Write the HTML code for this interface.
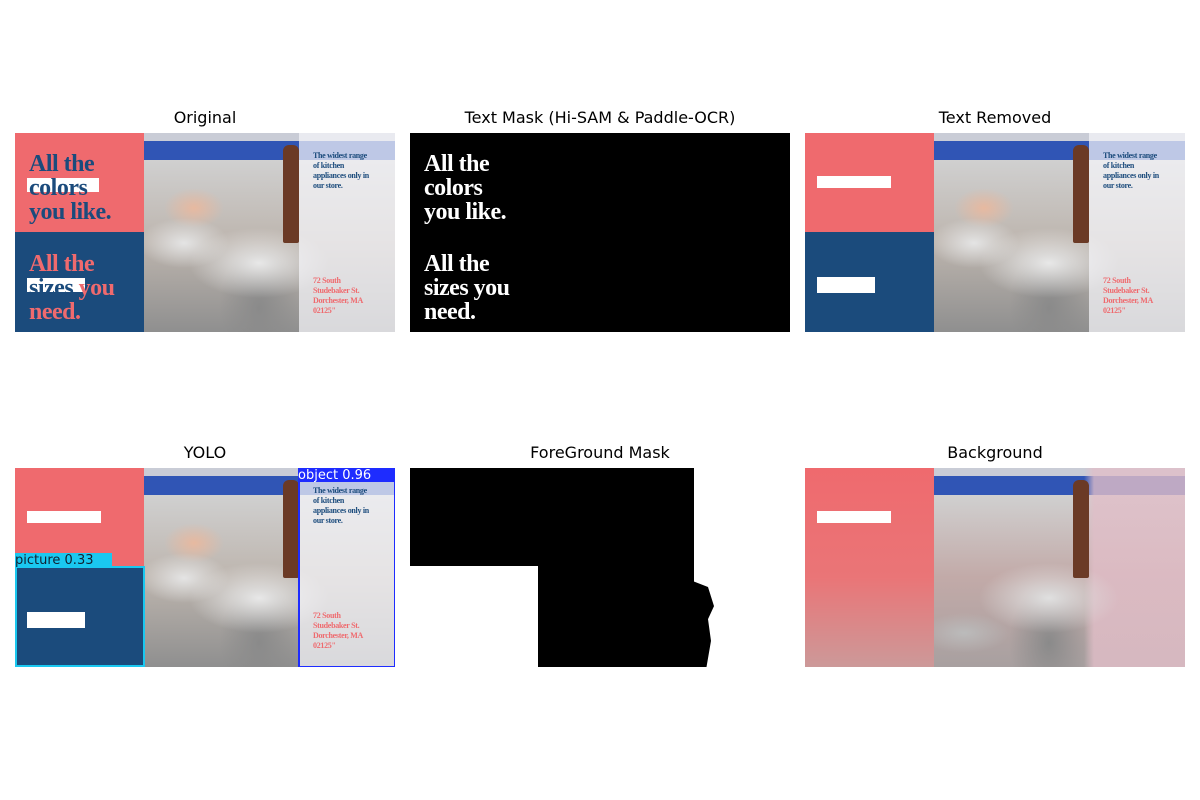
<!DOCTYPE html>
<html><head><meta charset="utf-8"><style>
body{margin:0;width:1200px;height:800px;background:#fff;font-family:"DejaVu Sans","Liberation Sans",sans-serif;position:relative;overflow:hidden}
.t{position:absolute;font-size:16px;color:#000;text-align:center;width:380px}
.p{position:absolute;width:380px;height:199px;overflow:hidden}
.pink{position:absolute;left:0;top:0;width:129px;height:99px;background:#ef6a6e}
.navy{position:absolute;left:0;top:99px;width:129px;height:100px;background:#1b4b7c}
.photo{position:absolute;left:129px;top:0;width:251px;height:199px;
background:
radial-gradient(ellipse 45px 25px at 40px 110px,#e4e4e4,transparent),
radial-gradient(ellipse 70px 35px at 115px 130px,#e8e8e8,transparent),
radial-gradient(ellipse 40px 60px at 115px 175px,#8a8a8a,transparent),
radial-gradient(ellipse 30px 20px at 50px 75px,#e7b9a0,transparent),
linear-gradient(#c9ccd6 0,#c9ccd6 8px,#3055b5 8px,#3055b5 27px,#d0d0d0 27px,#bdb5ae 55%,#8f8f8f 100%)}
.fade{position:absolute;left:155px;top:0;width:96px;height:199px;background:rgba(245,245,250,.72)}
.pepper{position:absolute;left:139px;top:12px;width:16px;height:98px;background:#6b3a26;border-radius:6px 6px 2px 2px}
.big{position:absolute;left:14px;font:bold 24px/24px "Liberation Serif",serif;letter-spacing:-0.5px}
.sm{position:absolute;left:298px;font:bold 8px/10px "Liberation Serif",serif;letter-spacing:-0.3px}
.bar{position:absolute;left:12px;width:72px;height:14px;background:#fff}
</style></head><body>
<div class="t" style="left:15px;top:108px">Original</div>
<div class="t" style="left:410px;top:108px">Text Mask (Hi-SAM &amp; Paddle-OCR)</div>
<div class="t" style="left:805px;top:108px">Text Removed</div>
<div class="t" style="left:15px;top:443px">YOLO</div>
<div class="t" style="left:410px;top:443px">ForeGround Mask</div>
<div class="t" style="left:805px;top:443px">Background</div>

<div class="p" style="left:15px;top:133px">
<div class="pink"></div><div class="navy"></div><div class="photo"><div class="pepper"></div><div class="fade"></div></div>
<div class="bar" style="top:45px"></div><div class="bar" style="top:145px;width:58px"></div>
<div class="big" style="top:19px;color:#1b4b7c">All the<br>colors<br>you like.</div>
<div class="big" style="top:119px;color:#ef6a6e">All the<br><span style="color:#1b4b7c">sizes</span> you<br>need.</div>
<div class="sm" style="top:18px;color:#1b4b7c">The widest range<br>of kitchen<br>appliances only in<br>our store.</div>
<div class="sm" style="top:143px;color:#ef6a6e">72 South<br>Studebaker St.<br>Dorchester, MA<br>02125"</div>
</div>

<div class="p" style="left:410px;top:133px;background:#000">
<div class="big" style="top:19px;color:#fff">All the<br>colors<br>you like.</div>
<div class="big" style="top:119px;color:#fff">All the<br>sizes you<br>need.</div>
</div>

<div class="p" style="left:805px;top:133px">
<div class="pink"></div><div class="navy"></div><div class="photo"><div class="pepper"></div><div class="fade"></div></div>
<div class="bar" style="top:43px;height:12px;width:74px"></div><div class="bar" style="top:144px;width:58px;height:16px"></div>
<div class="sm" style="top:18px;color:#1b4b7c">The widest range<br>of kitchen<br>appliances only in<br>our store.</div>
<div class="sm" style="top:143px;color:#ef6a6e">72 South<br>Studebaker St.<br>Dorchester, MA<br>02125"</div>
</div>

<div class="p" style="left:15px;top:468px">
<div class="pink"></div><div class="navy"></div><div class="photo"><div class="pepper"></div><div class="fade"></div></div>
<div class="bar" style="top:43px;height:12px;width:74px"></div><div class="bar" style="top:144px;width:58px;height:16px"></div>
<div class="sm" style="top:18px;color:#1b4b7c">The widest range<br>of kitchen<br>appliances only in<br>our store.</div>
<div class="sm" style="top:143px;color:#ef6a6e">72 South<br>Studebaker St.<br>Dorchester, MA<br>02125"</div>
<div style="position:absolute;left:283px;top:0;width:94px;height:196px;border:2px solid #1e2cff"></div>
<div style="position:absolute;left:283px;top:0;width:98px;height:14px;background:#1e2cff;color:#fff;font-size:13px;line-height:15px">object 0.96</div>
<div style="position:absolute;left:0;top:98px;width:126px;height:97px;border:2px solid #1ac8f0"></div>
<div style="position:absolute;left:0;top:85px;width:97px;height:14px;background:#1ac8f0;color:#123;font-size:13px;line-height:15px">picture 0.33</div>
</div>

<div class="p" style="left:410px;top:468px;background:#fff">
<div style="position:absolute;left:0;top:0;width:284px;height:98px;background:#000"></div>
<div style="position:absolute;left:128px;top:98px;width:156px;height:101px;background:#000"></div>
<div style="position:absolute;left:280px;top:112px;width:30px;height:87px;background:#000;clip-path:polygon(0 0,60% 8%,80% 30%,60% 45%,70% 70%,55% 100%,0 100%)"></div>
</div>

<div class="p" style="left:805px;top:468px">
<div style="position:absolute;inset:0;background:linear-gradient(#ef6a6e 0,#ea7577 55%,#c99 100%)"></div>
<div class="photo" style="background:
radial-gradient(ellipse 45px 20px at 30px 165px,#bbb,transparent),
radial-gradient(ellipse 70px 35px at 115px 130px,#e0e0e0,transparent),
radial-gradient(ellipse 40px 60px at 115px 175px,#8a8a8a,transparent),
linear-gradient(90deg,transparent 150px,rgba(225,190,200,.8) 160px),
linear-gradient(#c9ccd6 0,#c9ccd6 8px,#3055b5 8px,#3055b5 27px,#d0d0d0 27px,#c2aaa8 55%,#a8a0a0 100%)"><div class="pepper"></div></div>
<div class="bar" style="top:43px;height:12px;width:74px"></div>
</div>
</body></html>
